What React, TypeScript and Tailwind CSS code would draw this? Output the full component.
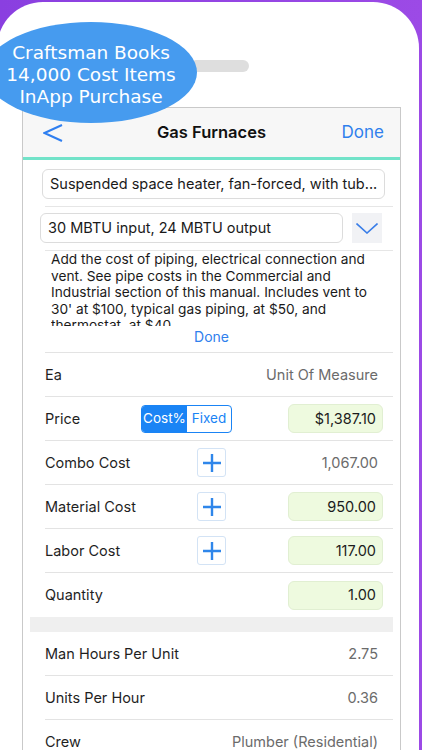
import React from "react";

const font = { fontFamily: "Inter, 'Noto Sans', sans-serif" };

const PlusButton = () => (
  <div className="w-[29px] h-[29px] border border-[#d3e3f5] rounded-[3px] flex items-center justify-center bg-white">
    <svg width="18" height="18" viewBox="0 0 18 18">
      <path d="M9 0v18M0 9h18" stroke="#2f86ea" strokeWidth="2.4" />
    </svg>
  </div>
);

const GreenField = ({ value }: { value: string }) => (
  <div className="w-[95px] h-[29px] bg-[#eefadf] border border-[#e1efd2] rounded-[6px] flex items-center justify-end pr-[6px] text-[14.5px] text-[#1c1c1c]">
    {value}
  </div>
);

interface RowProps {
  label: string;
  labelWidth?: string;
  middle?: React.ReactNode;
  value?: string;
  field?: string;
  last?: boolean;
}

const Row: React.FC<RowProps> = ({ label, labelWidth = "w-[152px]", middle, value, field, last }) => (
  <div className="pl-[15px]">
    <div
      className={`h-[44px] flex items-center pr-[10px] ${last ? "" : "border-b border-[#e3e3e3]"}`}
    >
      <div className={`${labelWidth} text-[14.5px] text-[#1f1f1f] shrink-0 whitespace-nowrap`}>{label}</div>
      {middle}
      <div className="flex-1" />
      {field ? (
        <GreenField value={field} />
      ) : (
        <div className="text-[14.5px] text-[#6b6b6b] mr-[5px] whitespace-nowrap">{value}</div>
      )}
    </div>
  </div>
);

export default function App() {
  return (
    <div
      className="w-[422px] h-[750px] overflow-hidden relative bg-gradient-to-r from-[#8a3fe0] to-[#9c4ae6]"
      style={font}
    >
      <div className="ml-[-3px] mt-[2px] w-[422px] h-[760px] bg-white rounded-t-[46px] pt-[58px]">
        <div className="ml-[193px] w-[59px] h-[12px] rounded-full bg-[#dedede]" />

        {/* app window */}
        <div className="ml-[25px] mt-[35px] w-[379px] h-[660px] border border-[#c9c9c9] bg-white">
          <div className="h-[49px] bg-[#f7f7f7] grid grid-cols-[1fr_auto_1fr] items-center">
            <svg className="ml-[20px]" width="20" height="18" viewBox="0 0 20 18">
              <polyline points="19,1 1.5,9 19,17" fill="none" stroke="#2f7ff0" strokeWidth="2" />
            </svg>
            <div className="text-center text-[16.5px] font-semibold text-[#111]">Gas Furnaces</div>
            <div className="text-right text-[17px] text-[#2f80ed] mr-[16px]">Done</div>
          </div>
          <div className="h-[3px] bg-[#72e3c9]" />

          <div className="ml-[19px] mt-[9px] w-[343px] h-[30px] border border-[#dcdcdc] rounded-[6px] pl-[7px] flex items-center text-[14.5px] text-[#1a1a1a] whitespace-nowrap overflow-hidden">
            Suspended space heater, fan-forced, with tub...
          </div>
          <div className="ml-[22px] mt-[7px] w-[348px] h-px bg-[#e6e6e6]" />

          <div className="mt-[6px] flex">
            <div className="ml-[17px] w-[303px] h-[30px] border border-[#dcdcdc] rounded-[6px] pl-[7px] flex items-center text-[14.5px] text-[#1a1a1a]">
              30 MBTU input, 24 MBTU output
            </div>
            <div className="ml-[9px] w-[30px] h-[30px] bg-[#f1f2f5] flex items-center justify-center">
              <svg width="22" height="11" viewBox="0 0 22 11">
                <polyline points="0.5,0.5 11,10 21.5,0.5" fill="none" stroke="#3a7ee8" strokeWidth="1.6" />
              </svg>
            </div>
          </div>
          <div className="ml-[22px] mt-[7px] w-[348px] h-px bg-[#e6e6e6]" />

          <div className="ml-[28px] w-[330px] h-[75px] overflow-hidden text-[13.7px] leading-[16.6px] text-[#1a1a1a]">
            Add the cost of piping, electrical connection and vent. See pipe costs in the Commercial and
            Industrial section of this manual. Includes vent to 30' at $100, typical gas piping, at $50, and
            thermostat, at $40.
          </div>
          <div className="mt-[2px] h-[18px] leading-[18px] text-center text-[14px] text-[#2f80ed]">Done</div>

          <div className="ml-[7px] mt-[6px] w-[363px]">
            <div className="ml-[15px] h-px bg-[#e3e3e3]" />
            <Row label="Ea" value="Unit Of Measure" />
            <Row
              label="Price"
              labelWidth="w-[96px]"
              middle={
                <div className="flex h-[28px] border border-[#1a84f5] rounded-[4px] overflow-hidden text-[13.5px]">
                  <div className="w-[45px] bg-[#1a84f5] text-white flex items-center justify-center">Cost%</div>
                  <div className="w-[44px] text-[#1a84f5] flex items-center justify-center">Fixed</div>
                </div>
              }
              field="$1,387.10"
            />
            <Row label="Combo Cost" middle={<PlusButton />} value="1,067.00" />
            <Row label="Material Cost" middle={<PlusButton />} field="950.00" />
            <Row label="Labor Cost" middle={<PlusButton />} field="117.00" />
            <Row label="Quantity" field="1.00" last />
            <div className="h-[15px] bg-[#efefef]" />
            <Row label="Man Hours Per Unit" value="2.75" />
            <Row label="Units Per Hour" value="0.36" />
            <Row label="Crew" value="Plumber (Residential)" />
          </div>
        </div>
      </div>

      {/* promo badge */}
      <div
        className="absolute left-[-15px] top-[22px] w-[212px] h-[101px] rounded-[50%] bg-[#469bef] flex flex-col items-center justify-center pt-[4px] text-white text-[18.5px] leading-[22px]"
        style={{ fontFamily: "'DejaVu Sans', sans-serif" }}
      >
        <div>Craftsman Books</div>
        <div>14,000 Cost Items</div>
        <div>InApp Purchase</div>
      </div>
    </div>
  );
}
